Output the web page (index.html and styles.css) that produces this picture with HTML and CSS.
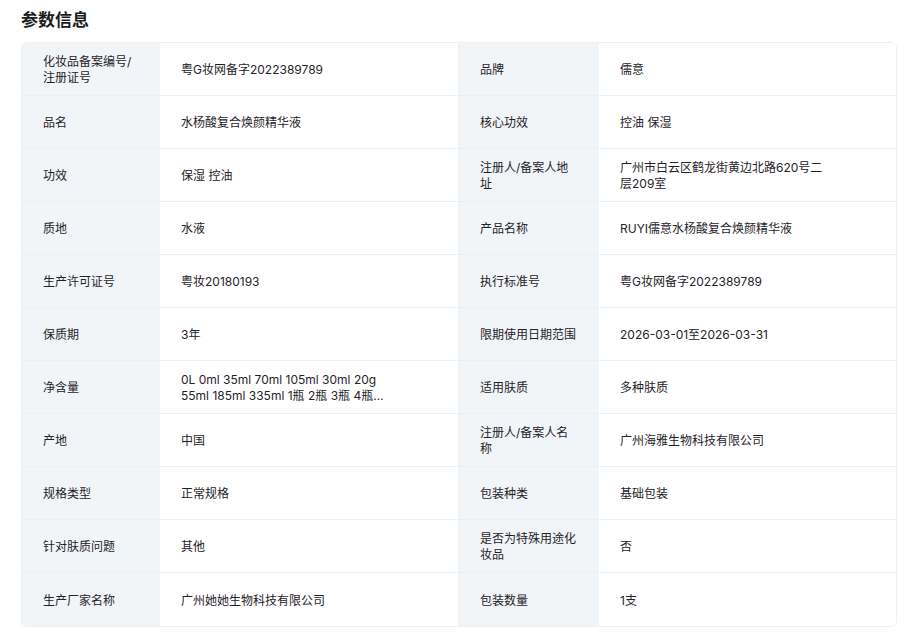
FILE: index.html
```html
<!DOCTYPE html>
<html lang="zh-CN">
<head>
<meta charset="utf-8">
<link rel="stylesheet" href="styles.css">
</head>
<body>
<div class="page">
  <h2 class="title">参数信息</h2>
  <div class="table">
    <div class="row"><div class="lab">化妆品备案编号/注册证号</div><div class="val">粤G妆网备字2022389789</div><div class="lab">品牌</div><div class="val">儒意</div></div>
    <div class="row"><div class="lab">品名</div><div class="val">水杨酸复合焕颜精华液</div><div class="lab">核心功效</div><div class="val">控油 保湿</div></div>
    <div class="row"><div class="lab">功效</div><div class="val">保湿 控油</div><div class="lab">注册人/备案人地址</div><div class="val"><span class="clamp">广州市白云区鹤龙街黄边北路620号二层209室</span></div></div>
    <div class="row"><div class="lab">质地</div><div class="val">水液</div><div class="lab">产品名称</div><div class="val">RUYI儒意水杨酸复合焕颜精华液</div></div>
    <div class="row"><div class="lab">生产许可证号</div><div class="val">粤妆20180193</div><div class="lab">执行标准号</div><div class="val">粤G妆网备字2022389789</div></div>
    <div class="row"><div class="lab">保质期</div><div class="val">3年</div><div class="lab">限期使用日期范围</div><div class="val">2026-03-01至2026-03-31</div></div>
    <div class="row"><div class="lab">净含量</div><div class="val"><span class="clamp">0L 0ml 35ml 70ml 105ml 30ml 20g 55ml 185ml 335ml 1瓶 2瓶 3瓶 4瓶 5瓶 6瓶</span></div><div class="lab">适用肤质</div><div class="val">多种肤质</div></div>
    <div class="row"><div class="lab">产地</div><div class="val">中国</div><div class="lab">注册人/备案人名称</div><div class="val">广州海雅生物科技有限公司</div></div>
    <div class="row"><div class="lab">规格类型</div><div class="val">正常规格</div><div class="lab">包装种类</div><div class="val">基础包装</div></div>
    <div class="row"><div class="lab">针对肤质问题</div><div class="val">其他</div><div class="lab">是否为特殊用途化妆品</div><div class="val">否</div></div>
    <div class="row last"><div class="lab">生产厂家名称</div><div class="val">广州她她生物科技有限公司</div><div class="lab">包装数量</div><div class="val">1支</div></div>
  </div>
</div>
</body>
</html>
```

FILE: styles.css
```css
* { box-sizing: border-box; }
html, body { margin: 0; padding: 0; background: #fff; }
body {
  font-family: Inter, "Noto Sans CJK SC", "Noto Sans", sans-serif;
  color: #1f2329;
  font-size: 12px;
}
.page { padding: 7px 27px 0 21px; }
.title {
  margin: 0 0 11px 0;
  font-family: "Noto Sans CJK SC", sans-serif;
  font-size: 17px;
  line-height: 24px;
  font-weight: 700;
  color: #1a1d21;
}
.table {
  border: 1px solid #edf0f3;
  border-radius: 6px;
  overflow: hidden;
  width: 876px;
}
.row {
  display: grid;
  grid-template-columns: 138px 298px 141px 1fr;
  height: 53px;
  border-bottom: 1px solid #edf0f3;
}
.row.last { border-bottom: none; }
.lab, .val {
  display: flex;
  align-items: center;
  padding: 2px 21px 0 21px;
  line-height: 16px;
}
.lab { background: #f2f5f8; padding-right: 19px; }
.val { background: #fff; }
.val + .lab { border-left: 1px solid #edf0f3; }
.clamp {
  display: -webkit-box;
  -webkit-line-clamp: 2;
  -webkit-box-orient: vertical;
  overflow: hidden;
  max-width: 204px;
}
```
